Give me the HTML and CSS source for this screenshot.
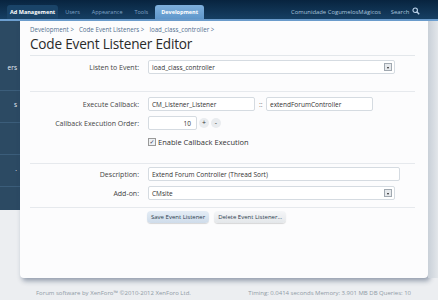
FILE: index.html
```html
<!DOCTYPE html>
<html>
<head>
    <title>Code Event Listener Editor</title>
    <link rel="stylesheet" href="styles.css">
</head>
<body>
    <div class="header">
        <ul class="tabs">
            <li class="tab first">Ad Management</li>
            <li class="tab">Users</li>
            <li class="tab">Appearance</li>
            <li class="tab">Tools</li>
            <li class="tab active">Development</li>
        </ul>
        <div class="header-right">
            <span>Comunidade CogumelosMágicos</span>
            <span class="search">Search
                <svg width="8" height="8" viewBox="0 0 10 10"><circle cx="4" cy="4" r="2.8" fill="none" stroke="#bcd3ea" stroke-width="1.4"/><line x1="6" y1="6" x2="9" y2="9" stroke="#bcd3ea" stroke-width="1.8"/></svg>
            </span>
        </div>
    </div>
    <div class="strip"></div>

    <div class="wrap">
        <div class="sidebar">
            <div class="side-item"><span>ers</span></div>
            <div class="side-item"><span>s</span></div>
            <div class="side-item"><span></span></div>
            <div class="side-item"><span>.</span></div>
        </div>
        <div class="panel">
            <div class="crumbs">
                <span>Development &gt;</span>
                <span>Code Event Listeners &gt;</span>
                <span>load_class_controller &gt;</span>
            </div>
            <h1>Code Event Listener Editor</h1>

            <form class="editor">
                <div class="row">
                    <label>Listen to Event:</label>
                    <div class="select wide">load_class_controller<span class="arrow"></span></div>
                </div>
                <hr class="sep-one">
                <div class="row">
                    <label>Execute Callback:</label>
                    <div class="field cb">CM_Listener_Listener</div>
                    <span class="sep">::</span>
                    <div class="field cb">extendForumController</div>
                </div>
                <div class="row">
                    <label>Callback Execution Order:</label>
                    <div class="field num">10</div>
                    <span class="spin">+</span>
                    <span class="spin">-</span>
                </div>
                <div class="row check-row">
                    <label></label>
                    <span class="checkbox">&#10003;</span>
                    <span class="check-text">Enable Callback Execution</span>
                </div>
                <hr class="sep-two">
                <div class="row">
                    <label>Description:</label>
                    <div class="field full">Extend Forum Controller (Thread Sort)</div>
                </div>
                <div class="row">
                    <label>Add-on:</label>
                    <div class="select wide">CMsite<span class="arrow"></span></div>
                </div>
                <hr class="sep-three">
                <div class="row buttons">
                    <label></label>
                    <span class="button primary">Save Event Listener</span>
                    <span class="button">Delete Event Listener...</span>
                </div>
            </form>
        </div>
        <div class="gutter"></div>
    </div>

    <div class="footer">
        <span>Forum software by XenForo™ ©2010-2012 XenForo Ltd.</span>
        <span>Timing: 0.0414 seconds Memory: 3.901 MB DB Queries: 10</span>
    </div>
</body>
</html>
```

FILE: styles.css
```css
/* Base */
body {
    margin: 0;
    width: 438px;
    height: 300px;
    overflow: hidden;
    background: #eceef1;
    font-family: "Open Sans", "DejaVu Sans", sans-serif;
    font-size: 7px;
    color: #333;
}

/* Header */
.header {
    height: 19px;
    display: flex;
    justify-content: space-between;
    align-items: flex-end;
    background: linear-gradient(#08243f, #163f63);
}

.tabs {
    list-style: none;
    margin: 0 0 0 7px;
    padding: 0;
    display: flex;
}

.tab {
    height: 14px;
    line-height: 14px;
    padding: 0 6px;
    color: #7fa3c7;
    font-size: 5.5px;
    border-radius: 3px 3px 0 0;
}

.tab.first {
    color: #fff;
    font-weight: bold;
    background: #1a4468;
    padding: 0 3px;
    margin-right: 1px;
}

.tab.active {
    margin-left: 1px;
    color: #fff;
    font-weight: bold;
    background: linear-gradient(#7eb0dd, #5f97cb);
    padding: 0 6px;
}

.header-right {
    display: flex;
    gap: 10px;
    margin-right: 18px;
    height: 14px;
    line-height: 14px;
    color: #a9c4de;
    font-size: 5.9px;
}

.search svg {
    vertical-align: -1px;
    margin-left: 1px;
}

.strip {
    height: 2px;
    background: #6d9fd0;
}

/* Main area */
.wrap {
    display: flex;
    align-items: flex-start;
}

.sidebar {
    width: 20px;
    height: 189px;
    padding-top: 36px;
    box-sizing: border-box;
    background: #2c4a63;
}

.side-item {
    height: 31px;
    border-bottom: 1px solid #3b5d7a;
    color: #e3ecf4;
    font-size: 6.5px;
    line-height: 28px;
    text-align: right;
    padding-right: 3px;
}

.side-item:first-child {
    height: 33px;
    line-height: 22px;
}

.panel {
    width: 408px;
    height: 257px;
    box-sizing: border-box;
    padding: 4px 13px 0 10px;
    background: #fcfcfd;
    border-radius: 0 0 4px 4px;
    box-shadow: 2px 3px 5px rgba(40, 60, 90, 0.45);
}

.gutter {
    width: 10px;
    height: 257px;
    background: linear-gradient(90deg, #c9d0d8, #e2e6ea);
}

.crumbs {
    display: flex;
    gap: 5px;
    color: #52708f;
    font-size: 6.2px;
    height: 9px;
    line-height: 9px;
}

h1 {
    margin: 0;
    font-size: 13.6px;
    font-weight: normal;
    letter-spacing: -0.2px;
    color: #2a2a2a;
    line-height: 19px;
    padding-bottom: 2px;
    border-bottom: 1px solid #e3e7eb;
}

/* Form */
.editor {
    display: flex;
    flex-direction: column;
    margin: 4px 0 0 0;
}

.editor hr {
    width: 100%;
    border: none;
    border-top: 1px solid #e6e9ed;
}

.editor hr.sep-one {
    margin: 12px 0 5px;
}

.editor hr.sep-two {
    margin: 9px 0 3px;
}

.editor hr.sep-three {
    margin: 2px 0 3px;
}

.row {
    display: flex;
    align-items: center;
    gap: 4px;
    height: 14px;
    margin-bottom: 5px;
}

.row label {
    width: 109px;
    margin-right: 5px;
    text-align: right;
    color: #444;
    font-size: 7px;
}

.field, .select {
    height: 14px;
    line-height: 13px;
    box-sizing: border-box;
    border: 1px solid #d5dbe1;
    border-radius: 2px;
    background: #fff;
    padding: 0 3px;
    font-size: 6.5px;
    color: #333;
}

.select {
    position: relative;
}

.select.wide {
    width: 247px;
}

.arrow {
    position: absolute;
    right: 2px;
    top: 2px;
    width: 8px;
    height: 8px;
    box-sizing: border-box;
    border: 1px solid #a0a8b0;
    background: #e6e9ec;
}

.arrow::after {
    content: "";
    position: absolute;
    left: 1.5px;
    top: 2.5px;
    border-left: 1.5px solid transparent;
    border-right: 1.5px solid transparent;
    border-top: 2px solid #222;
}

.field.cb {
    width: 107px;
}

.sep {
    color: #777;
    width: 3px;
}

.field.num {
    width: 49px;
    text-align: right;
    padding-right: 5px;
}

.spin {
    width: 10px;
    height: 10px;
    line-height: 10px;
    border-radius: 5px;
    background: #e9ecef;
    text-align: center;
    font-size: 7px;
    margin-left: -2px;
    color: #333;
}

.field.full {
    width: 252px;
}

.check-row {
    gap: 2px;
}

.checkbox {
    width: 6px;
    height: 6px;
    border: 1px solid #999;
    background: #eef1f4;
    color: #335;
    font-size: 6px;
    line-height: 6px;
    text-align: center;
    margin-left: 2px;
}

.check-text {
    font-size: 7.5px;
    color: #333;
}

.buttons {
    gap: 5px;
    height: 12px;
}

.buttons label {
    margin-right: 3px;
}

.button {
    height: 12px;
    line-height: 12px;
    padding: 0 4px;
    border-radius: 4px;
    font-size: 6px;
    color: #2d3d4e;
    background: linear-gradient(#f5f6f8, #e4e7ea);
    box-shadow: 0 1px 1px rgba(0, 0, 0, 0.15);
}

.button.primary {
    background: linear-gradient(#e4edf6, #cfdcea);
}

/* Footer */
.footer {
    display: flex;
    justify-content: space-between;
    padding: 11px 27px 0 36px;
    color: #8f9aa5;
    font-size: 6px;
}
```
